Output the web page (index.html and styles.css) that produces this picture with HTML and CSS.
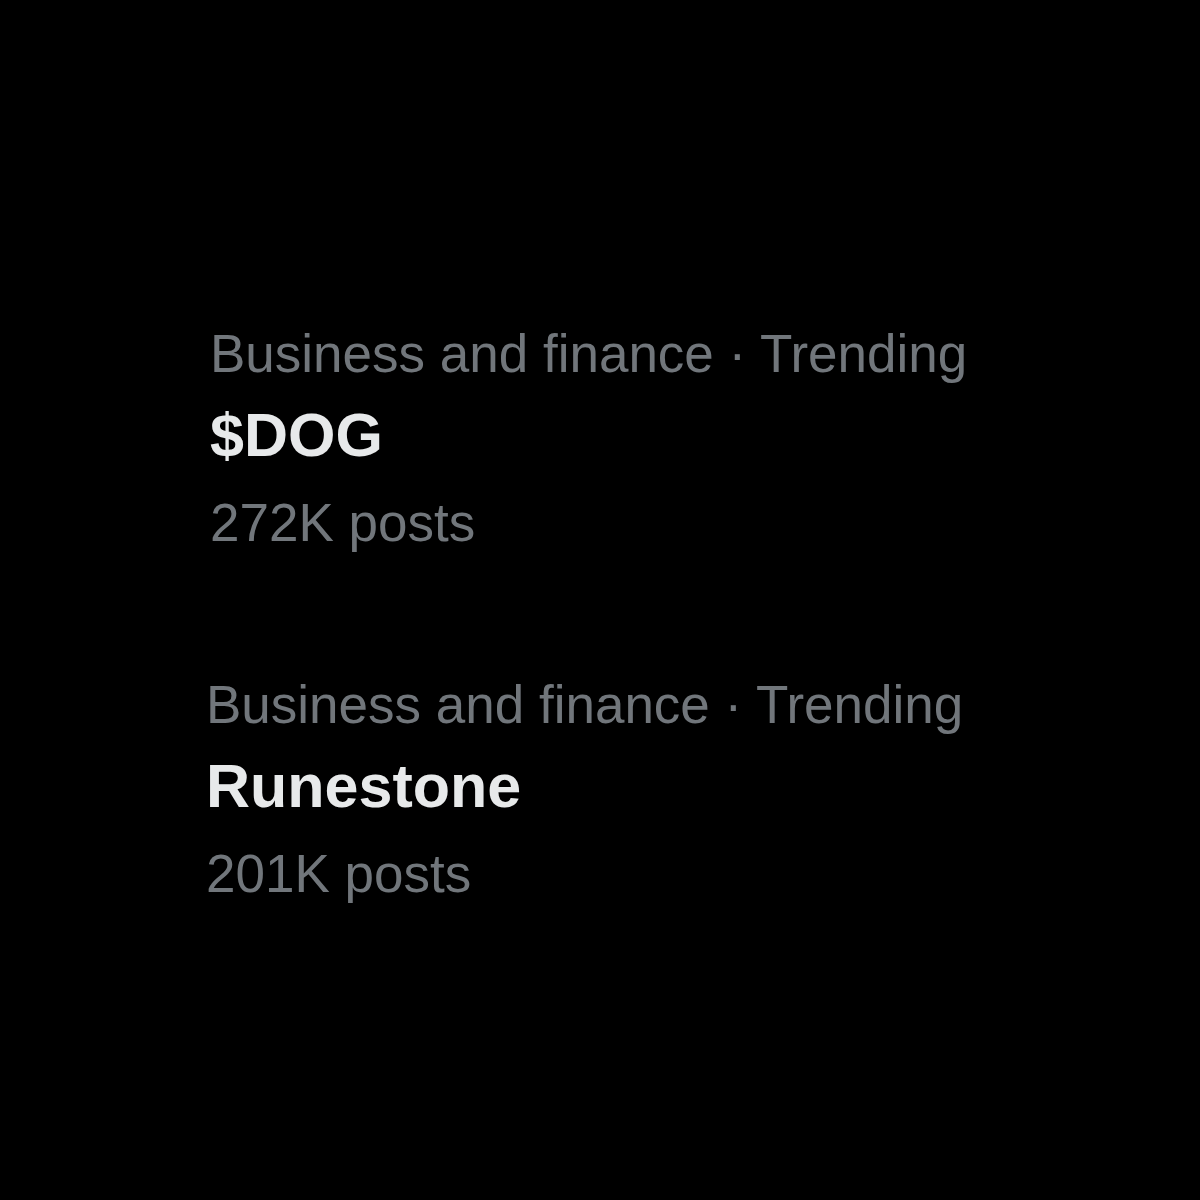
FILE: index.html
```html
<!DOCTYPE html>
<html lang="en">
<head>
<meta charset="utf-8">
<title>Trending</title>
<link rel="stylesheet" href="styles.css">
</head>
<body>
<main class="trends">
  <div class="trend">
    <div class="meta">Business and finance · Trending</div>
    <div class="title">$DOG</div>
    <div class="count">272K posts</div>
  </div>
  <div class="trend trend-shift">
    <div class="meta">Business and finance · Trending</div>
    <div class="title">Runestone</div>
    <div class="count">201K posts</div>
  </div>
</main>
</body>
</html>
```
FILE: styles.css
```css
html, body {
  margin: 0;
  padding: 0;
  background: #000;
}
body {
  width: 1200px;
  height: 1200px;
  font-family: "Liberation Sans", Arial, sans-serif;
}
.trends {
  display: flex;
  flex-direction: column;
  gap: 102px;
  padding: 314px 0 0 210px;
}
.trend {
  display: flex;
  flex-direction: column;
}
.trend-shift {
  margin-left: -4px;
}
.meta {
  color: #71767b;
  font-size: 53px;
  line-height: 80px;
}
.title {
  color: #e7e9ea;
  font-size: 61px;
  font-weight: 700;
  line-height: 82px;
}
.count {
  color: #71767b;
  font-size: 53px;
  line-height: 80px;
  margin-top: 7px;
}
```
